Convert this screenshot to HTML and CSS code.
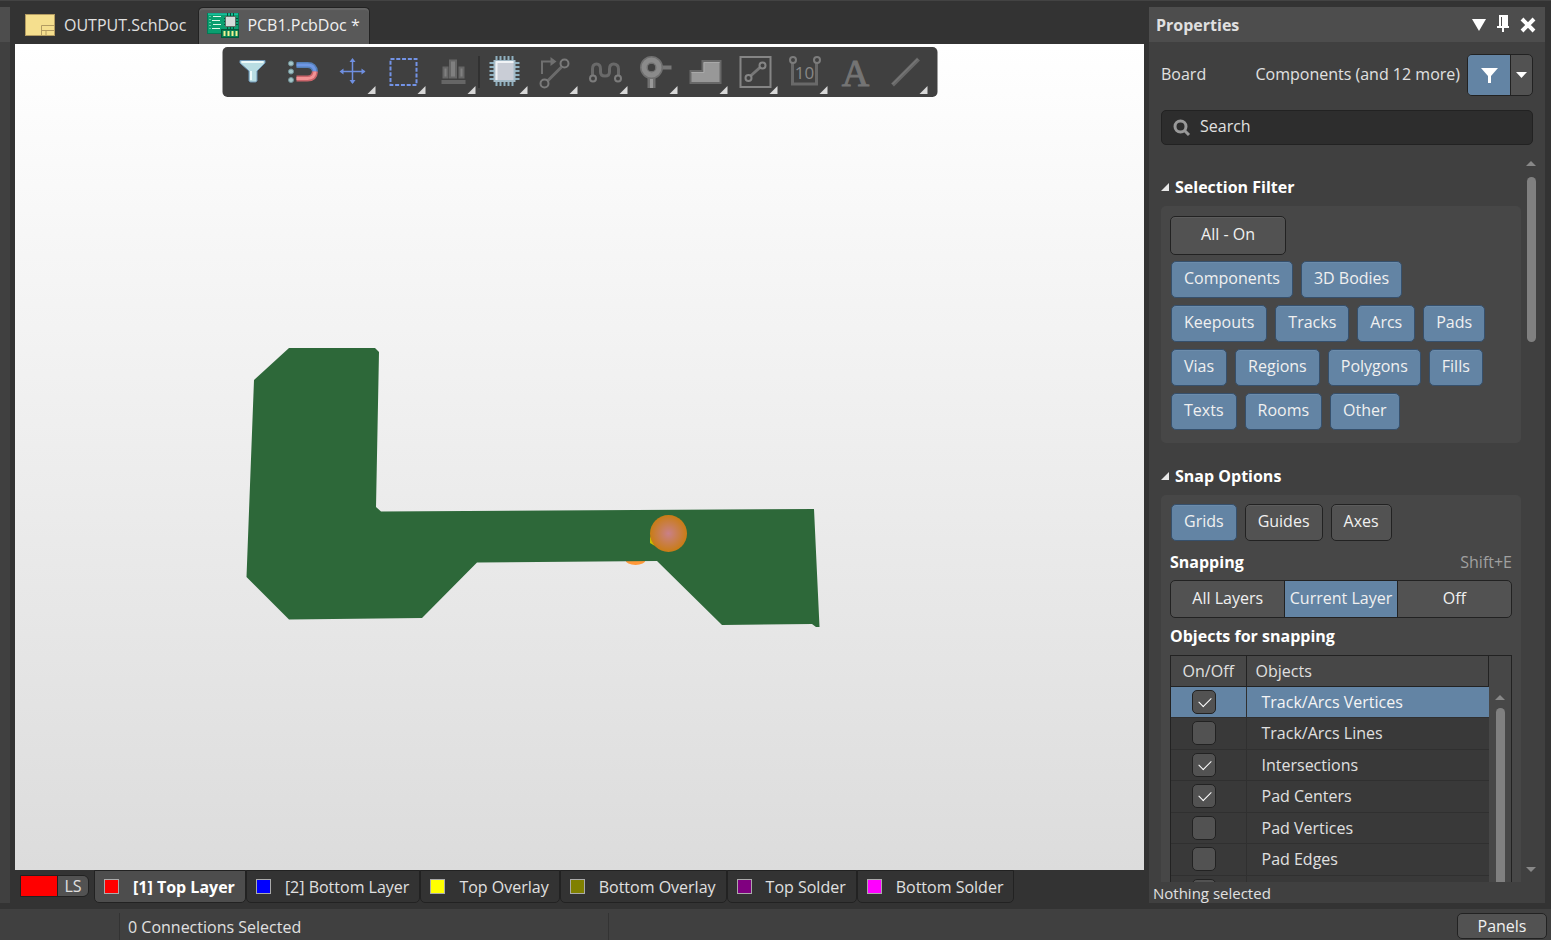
FILE: index.html
```html
<!DOCTYPE html>
<html lang="en">
<head>
    <meta charset="UTF-8">
    <meta name="viewport" content="width=device-width, initial-scale=1.0">
    <title>PCB1.PcbDoc</title>
    <link rel="stylesheet" href="styles.css">
</head>
<body>
    <div class="workspace">
        <div class="dock"><div class="dock-head"></div></div>
        <main class="document">
            <nav class="doc-tabs">
                <button class="doc-tab">
                    <svg width="30" height="22" viewBox="0 0 30 22">
                        <rect x=".5" y=".5" width="29" height="21" fill="#f5df8e" stroke="#b39c62"/>
                        <path d="M16.500 21V11.500H29M16.500 16.500H29M21 16.500V21" fill="none" stroke="#b39c62"/>
                    </svg>
                    OUTPUT.SchDoc
                </button>
                <button class="doc-tab doc-tab--active">
                    <svg width="32" height="26" viewBox="0 0 32 26">
                        <rect x=".5" y="1.500" width="31" height="20" fill="#0a9f70" stroke="#047a55"/>
                        <path d="M1 2H31" stroke="#22dfc4"/>
                        <path d="M6 4.500h8M5 8.500h8M6 12.500h8M5 16.500h8" stroke="#e0f7e8"/>
                        <path d="M3 4v14" stroke="#b8efd4" stroke-dasharray="1 2"/>
                        <path d="M20.500 1v16M23.500 1v16M26.500 1v16M17 6.500h14M17 9.500h14M17 12.500h14" stroke="#044f38"/>
                        <rect x="18.500" y="4.500" width="10" height="10" fill="#d5dcda" stroke="#5d7068"/>
                        <rect x="14.500" y="17.500" width="17" height="8" fill="#078055" stroke="#04593c"/>
                        <path d="M17.500 19v5M21.500 19v5M25.500 19v5M29.500 19v5" stroke="#f2f391" stroke-width="2"/>
                    </svg>
                    PCB1.PcbDoc *
                </button>
            </nav>
            <div class="canvas">
                <svg class="board" viewBox="15 44 1129 826">
                    <defs>
                        <radialGradient id="pad">
                            <stop offset="0" stop-color="#c98088"/>
                            <stop offset="1" stop-color="#c97c14"/>
                        </radialGradient>
                    </defs>
                    <ellipse cx="635.500" cy="560" rx="10" ry="5" fill="#ff9838"/>
                    <path fill="#2d6839" d="M289 348H375L379 352L376 507L381 511.500L814 509L819.500 627H816L812 624L722 625L657 561L477 562.500L422 618L289 619.500L246.500 577L254 380Z"/>
                    <path fill="#c8bf00" d="M650 536v7l5 3z"/>
                    <circle cx="668.500" cy="533.500" r="18.500" fill="url(#pad)"/>
                </svg>
                <div class="toolbar">
                    <button class="tool" aria-label="Filter">
                        <svg viewBox="0 0 50 50">
                            <path d="M12.500 13.500H37.500V16L29.500 24V34L28 35H23L21.500 34V24L12.500 16Z" fill="#b9dde3" stroke="#6d95b5"/>
                            <path d="M14 15H36" stroke="#eefafa" stroke-width="2"/>
                            <path d="M23.500 24V33" stroke="#eefafa" stroke-width="2"/>
                        </svg>
                    </button>
                    <button class="tool" aria-label="Snapping">
                        <svg viewBox="0 0 50 50">
                            <g fill="#a5c6c9" stroke="#6f9096"><circle cx="13.500" cy="16.500" r="2.500"/><circle cx="13.500" cy="24.500" r="2.500"/><circle cx="13.500" cy="33" r="2.500"/></g>
                            <path d="M19 18H30Q37 18 37.500 25" fill="none" stroke="#5580b8" stroke-width="6"/>
                            <path d="M19 18H30Q37 18 37.500 25" fill="none" stroke="#6f97e4" stroke-width="3"/>
                            <path d="M19 31.500H30Q37 31.500 37.500 24.500" fill="none" stroke="#c9646a" stroke-width="6"/>
                            <path d="M19 31.500H30Q37 31.500 37.500 24.500" fill="none" stroke="#f29294" stroke-width="3"/>
                        </svg>
                    </button>
                    <button class="tool" aria-label="Move">
                        <svg viewBox="0 0 50 50">
                            <path d="M25 13V36M14 24.500H37" stroke="#6f8fe0" stroke-width="1.500"/>
                            <path d="M25 11l3 4h-6zM25 37l3-4h-6zM12 24.500l4-3v6zM38 24.500l-4-3v6z" fill="#6f8fe0"/>
                            <path class="more" d="M48 39V47H40Z"/>
                        </svg>
                    </button>
                    <button class="tool" aria-label="Select">
                        <svg viewBox="0 0 50 50">
                            <rect x="13" y="12" width="26" height="26" fill="none" stroke="#7393e6" stroke-width="2" stroke-dasharray="4 1.780"/>
                            <path class="more" d="M48 39V47H40Z"/>
                        </svg>
                    </button>
                    <button class="tool" aria-label="Align">
                        <svg viewBox="0 0 50 50">
                            <path d="M14 33H38V37H14Z" fill="#666"/>
                            <path d="M16 20.500h4v10h-4zM22.500 13.500h6v17h-6zM32 20.500h4v10h-4z" fill="#808080" stroke="#666" stroke-width="2"/>
                            <path class="more" d="M48 39V47H40Z"/>
                        </svg>
                    </button>
                    <span class="tool-sep"></span>
                    <button class="tool" aria-label="Place component">
                        <svg viewBox="0 0 50 50">
                            <path d="M17 9V39M21 9V39M25 9V39M29 9V39M33 9V39M10 16H40M10 20H40M10 24H40M10 28H40M10 32H40" stroke="#8fb0c0" stroke-width="2"/>
                            <rect x="15" y="14" width="20" height="20" fill="#c9cdd6" stroke="#a2b9c6" stroke-width="2"/>
                            <path d="M17 33V15H34" fill="none" stroke="#f0f3f6" stroke-width="2"/>
                            <path class="more" d="M48 39V47H40Z"/>
                        </svg>
                    </button>
                    <button class="tool" aria-label="Route">
                        <svg viewBox="0 0 50 50">
                            <path d="M12.500 27V14.500H22" fill="none" stroke="#707070" stroke-width="2"/>
                            <path d="M21 10l6 4.500-6 4.500z" fill="#707070"/>
                            <path d="M18 34L32 20" stroke="#6b6b6b" stroke-width="3"/>
                            <g fill="none" stroke="#7a7a7a" stroke-width="2"><circle cx="15" cy="36.500" r="4"/><circle cx="35" cy="16.500" r="4"/></g>
                            <path class="more" d="M48 39V47H40Z"/>
                        </svg>
                    </button>
                    <button class="tool" aria-label="Tune length">
                        <svg viewBox="0 0 50 50">
                            <path d="M13 28V22Q13 17 17 17Q21 17 21 22V25Q21 29 25.500 29Q30 29 30 25V22Q30 17 34 17Q39 17 39 22V28" fill="none" stroke="#696969" stroke-width="3"/>
                            <g fill="#404040" stroke="#7c7c7c" stroke-width="2"><circle cx="13.500" cy="31.500" r="3"/><circle cx="38.500" cy="31.500" r="3"/></g>
                            <path class="more" d="M48 39V47H40Z"/>
                        </svg>
                    </button>
                    <button class="tool" aria-label="Via">
                        <svg viewBox="0 0 50 50">
                            <path d="M30 20.500H42" stroke="#777" stroke-width="4"/>
                            <path d="M22 30V41" stroke="#707070" stroke-width="8"/>
                            <path d="M22 30V41" stroke="#999" stroke-width="3"/>
                            <circle cx="22" cy="20.500" r="7.500" fill="none" stroke="#707070" stroke-width="8"/>
                            <circle cx="22" cy="20.500" r="7.500" fill="none" stroke="#8a8a8a" stroke-width="5"/>
                            <circle cx="22" cy="20.500" r="3.500" fill="#404040"/>
                            <path class="more" d="M48 39V47H40Z"/>
                        </svg>
                    </button>
                    <button class="tool" aria-label="Polygon pour">
                        <svg viewBox="0 0 50 50">
                            <path d="M11 36V24H23V14H41V36Z" fill="#989898" stroke="#686868" stroke-width="2"/>
                            <path d="M12 25.500H24.500V15.500H40" fill="none" stroke="#a9a9a9"/>
                            <path class="more" d="M48 39V47H40Z"/>
                        </svg>
                    </button>
                    <button class="tool" aria-label="Room">
                        <svg viewBox="0 0 50 50">
                            <rect x="11" y="10" width="30" height="30" fill="none" stroke="#858585" stroke-width="2"/>
                            <path d="M21 29L31 20" stroke="#777" stroke-width="3"/>
                            <g fill="none" stroke="#858585" stroke-width="2"><circle cx="19" cy="31" r="3"/><circle cx="33" cy="18.500" r="3"/></g>
                            <path class="more" d="M48 39V47H40Z"/>
                        </svg>
                    </button>
                    <button class="tool" aria-label="Dimension">
                        <svg viewBox="0 0 50 50">
                            <path d="M13 16V37H37V16" fill="none" stroke="#696969" stroke-width="3"/>
                            <g fill="#404040" stroke="#7c7c7c" stroke-width="2"><circle cx="13.500" cy="13" r="3"/><circle cx="37.500" cy="13" r="3"/></g>
                            <text class="dim-text" x="25" y="32" text-anchor="middle">10</text>
                            <path class="more" d="M48 39V47H40Z"/>
                        </svg>
                    </button>
                    <button class="tool" aria-label="Text">
                        <svg viewBox="0 0 50 50"><text class="letter" x="26" y="39" text-anchor="middle">A</text></svg>
                    </button>
                    <button class="tool" aria-label="Line">
                        <svg viewBox="0 0 50 50">
                            <path d="M13 38L39 12" stroke="#686868" stroke-width="4"/>
                            <path d="M13 37L38 12" stroke="#808080"/>
                            <path class="more" d="M48 39V47H40Z"/>
                        </svg>
                    </button>
                </div>
            </div>
            <div class="layers">
                <div class="layer-set">
                    <span class="layer-color red"></span>
                    <button class="ls">LS</button>
                </div>
                <button class="layer layer--active"><span class="swatch red"></span>[1] Top Layer</button>
                <button class="layer"><span class="swatch blue"></span>[2] Bottom Layer</button>
                <button class="layer"><span class="swatch yellow"></span>Top Overlay</button>
                <button class="layer"><span class="swatch olive"></span>Bottom Overlay</button>
                <button class="layer"><span class="swatch purple"></span>Top Solder</button>
                <button class="layer"><span class="swatch magenta"></span>Bottom Solder</button>
            </div>
        </main>
        <aside class="panel">
            <header class="panel-head">
                <h1>Properties</h1>
                <button class="head-btn" aria-label="Menu"><svg width="14" height="12" viewBox="0 0 14 12"><path d="M0 0H14L7 12Z" fill="#fff"/></svg></button>
                <button class="head-btn" aria-label="Pin"><svg width="12" height="19" viewBox="0 0 12 19"><path d="M2 0H11V11H12V13H7V17H5V13H0V11H2ZM4 2V11H5V2Z" fill="#fff" fill-rule="evenodd"/></svg></button>
                <button class="head-btn" aria-label="Close"><svg width="16" height="16" viewBox="0 0 16 16"><path d="M2 2L14 14M14 2L2 14" stroke="#fff" stroke-width="4"/></svg></button>
            </header>
            <div class="scope">
                <span>Board</span>
                <span class="scope-types">Components (and 12 more)</span>
                <div class="split">
                    <button class="split-main" aria-label="Filter"><svg width="17" height="15" viewBox="0 0 17 15"><path d="M0 0H17L10 8V15H7V8Z" fill="#fff"/></svg></button>
                    <button class="split-arrow" aria-label="Filter options"><svg width="11" height="6" viewBox="0 0 11 6"><path d="M0 0H11L5.500 6Z" fill="#fff"/></svg></button>
                </div>
            </div>
            <label class="search">
                <svg width="18" height="18" viewBox="0 0 18 18"><circle cx="7.500" cy="7.500" r="5.500" fill="none" stroke="#999" stroke-width="3"/><path d="M11 11L16 16" stroke="#999" stroke-width="3"/></svg>
                <input type="text" placeholder="Search" aria-label="Search">
            </label>
            <div class="scroll">
                <div class="sections">
                    <h2>Selection Filter</h2>
                    <section class="box">
                        <button class="btn btn--all">All - On</button>
                        <div class="row">
                            <button class="btn btn--on">Components</button>
                            <button class="btn btn--on">3D Bodies</button>
                        </div>
                        <div class="row">
                            <button class="btn btn--on">Keepouts</button>
                            <button class="btn btn--on">Tracks</button>
                            <button class="btn btn--on">Arcs</button>
                            <button class="btn btn--on">Pads</button>
                        </div>
                        <div class="row">
                            <button class="btn btn--on">Vias</button>
                            <button class="btn btn--on">Regions</button>
                            <button class="btn btn--on">Polygons</button>
                            <button class="btn btn--on">Fills</button>
                        </div>
                        <div class="row">
                            <button class="btn btn--on">Texts</button>
                            <button class="btn btn--on">Rooms</button>
                            <button class="btn btn--on">Other</button>
                        </div>
                    </section>
                    <h2>Snap Options</h2>
                    <section class="box box--snap">
                        <div class="row">
                            <button class="btn btn--on">Grids</button>
                            <button class="btn">Guides</button>
                            <button class="btn">Axes</button>
                        </div>
                        <div class="caption"><h3>Snapping</h3><span>Shift+E</span></div>
                        <div class="segments">
                            <button>All Layers</button>
                            <button class="current">Current Layer</button>
                            <button>Off</button>
                        </div>
                        <div class="caption"><h3>Objects for snapping</h3></div>
                        <div class="objects">
                            <table>
                                <thead>
                                    <tr><th class="col-check">On/Off</th><th>Objects</th></tr>
                                </thead>
                                <tbody>
                                    <tr class="selected"><td><input type="checkbox" id="o1" checked></td><td><label for="o1">Track/Arcs Vertices</label></td></tr>
                                    <tr><td><input type="checkbox" id="o2"></td><td><label for="o2">Track/Arcs Lines</label></td></tr>
                                    <tr><td><input type="checkbox" id="o3" checked></td><td><label for="o3">Intersections</label></td></tr>
                                    <tr><td><input type="checkbox" id="o4" checked></td><td><label for="o4">Pad Centers</label></td></tr>
                                    <tr><td><input type="checkbox" id="o5"></td><td><label for="o5">Pad Vertices</label></td></tr>
                                    <tr><td><input type="checkbox" id="o6"></td><td><label for="o6">Pad Edges</label></td></tr>
                                    <tr><td><input type="checkbox" id="o7" aria-label="Object"></td><td></td></tr>
                                </tbody>
                            </table>
                            <div class="objects-bar">
                                <span class="arrow-up"></span>
                                <span class="thumb"></span>
                            </div>
                        </div>
                    </section>
                </div>
                <div class="bar">
                    <span class="arrow-up"></span>
                    <span class="thumb"></span>
                    <span class="arrow-down"></span>
                </div>
            </div>
            <footer class="panel-foot">Nothing selected</footer>
        </aside>
    </div>
    <div class="status">
        <span class="status-cell status-cell--coords"></span>
        <span class="status-cell status-cell--info">0 Connections Selected</span>
        <button class="panels">Panels</button>
    </div>
</body>
</html>
```
FILE: styles.css
```css
*{
    padding: 0;
    margin: 0;
    box-sizing: border-box;
}
body{
    display: flex;
    flex-direction: column;
    height: 100vh;
    overflow: hidden;
    background-color: #333;
    color: #e0e0e0;
    font-family: "Open Sans", "Noto Sans", sans-serif;
    font-size: 16px;
    line-height: 22px;
    border-top: 1px solid #434343;
}
button, input{
    font: inherit;
    color: inherit;
    border: 0;
    background: none;
}
svg{
    display: block;
    flex: none;
}
.red{ background-color: #f00; }
.blue{ background-color: #00f; }
.yellow{ background-color: #ff0; }
.olive{ background-color: #808000; }
.purple{ background-color: #800080; }
.magenta{ background-color: #f0f; }

.workspace{
    flex: 1;
    min-height: 0;
    display: flex;
    gap: 5px;
    padding-right: 6px;
}
.dock{
    width: 10px;
    margin: 6px 0;
    background-color: #404040;
}
.dock-head{
    height: 35px;
    background-color: #4d4d4d;
}

/* document area */
.document{
    flex: 1;
    min-width: 0;
    display: flex;
    flex-direction: column;
}
.doc-tabs{
    height: 43px;
    padding-top: 6px;
    display: flex;
}
.doc-tab{
    display: flex;
    align-items: center;
    gap: 9px;
    padding: 0 12px 2px 10px;
    white-space: nowrap;
}
.doc-tab--active{
    gap: 8px;
    padding: 0 9px 2px 8px;
    color: #f0f0f0;
    background-color: #595959;
    border: 1px solid #222;
    border-bottom: 0;
    border-radius: 5px 5px 0 0;
    box-shadow: inset 0 2px 1px #666;
}
.canvas{
    flex: 1;
    min-height: 0;
    position: relative;
    background: linear-gradient(#fff, #dcdcdc);
}
.board{
    width: 100%;
    height: 100%;
}
.toolbar{
    position: absolute;
    top: 3px;
    left: 50%;
    transform: translateX(-50%);
    display: flex;
    padding: 0 8px 0 5px;
    background-color: #404040;
    border-radius: 5px;
}
.tool{
    width: 50px;
    height: 50px;
}
.tool-sep{
    width: 1px;
    height: 32px;
    margin: 9px 0 0 1px;
    background-color: #222;
}
.more{
    fill: #d8d8d8;
}
.dim-text{
    font-family: "Open Sans", sans-serif;
    font-size: 17px;
    fill: #888;
}
.letter{
    font-family: "Liberation Serif", serif;
    font-size: 38px;
    fill: #747474;
    stroke: #747474;
}

.layers{
    height: 39px;
    padding: 0 0 6px 5px;
    display: flex;
}
.layer-set{
    display: flex;
    width: 69px;
    height: 22px;
    margin: 5px 5px 0 0;
    border: 1px solid #222;
    border-radius: 0 6px 6px 0;
}
.layer-color{
    width: 36px;
}
.ls{
    flex: 1;
    background-color: #525252;
    border-left: 1px solid #222;
    border-radius: 0 5px 5px 0;
    line-height: 20px;
}
.layer{
    display: flex;
    align-items: center;
    gap: 14px;
    padding: 0 10px 0 9px;
    white-space: nowrap;
    border: 1px solid #222;
    border-radius: 0 0 5px 5px;
}
.layer--active{
    color: #fff;
    font-weight: bold;
    background-color: #4d4d4d;
}
.swatch{
    width: 15px;
    height: 15px;
    border: 1px solid #aaa;
}

/* properties panel */
.panel{
    width: 396px;
    margin: 6px 0;
    background-color: #404040;
    display: flex;
    flex-direction: column;
}
.panel-head{
    height: 35px;
    padding: 0 9px 0 7px;
    background-color: #4d4d4d;
    display: flex;
    align-items: center;
    gap: 11px;
}
h1, h2, h3{
    font-size: 16px;
    line-height: 22px;
    font-weight: bold;
}
h1{
    flex: 1;
}
.scope{
    display: flex;
    align-items: center;
    padding: 12px 12px 0;
}
.scope span{
    padding-bottom: 2px;
}
.scope-types{
    margin-left: auto;
}
.split{
    display: flex;
    height: 42px;
    margin-left: 7px;
    border: 1px solid #222;
    border-radius: 5px;
    background-color: #525252;
    overflow: hidden;
}
.split-main, .split-arrow{
    display: flex;
    align-items: center;
    justify-content: center;
}
.split-main{
    width: 43px;
    background-color: #6384a4;
    border-right: 1px solid #222;
}
.split-arrow{
    width: 21px;
}
.search{
    display: flex;
    align-items: center;
    gap: 9px;
    height: 35px;
    margin: 14px 12px 10px;
    padding: 0 11px;
    background-color: #2d2d2d;
    border: 1px solid #222;
    border-radius: 5px;
}
.search input{
    flex: 1;
    min-width: 0;
    padding-bottom: 4px;
}
.search input::placeholder{
    color: #e0e0e0;
    opacity: 1;
}
.scroll{
    flex: 1;
    min-height: 0;
    display: flex;
    padding: 0 9px 0 12px;
}
.sections{
    flex: 1;
    overflow: hidden;
}
h2{
    display: flex;
    align-items: center;
    gap: 6px;
    margin: 21px 0 8px;
    color: #fff;
}
h2::before{
    content: "";
    border-left: 8px solid transparent;
    border-bottom: 8px solid #e8e8e8;
}
.box{
    padding: 10px 9px 13px;
    background-color: #474747;
    border-radius: 5px;
    margin-bottom: 22px;
}
.row{
    display: flex;
    gap: 8px;
    margin: 7px 1px 0;
}
.box .btn--all + .row{
    margin-top: 6px;
}
.btn{
    height: 37px;
    padding: 0 12px 3px;
    white-space: nowrap;
    color: #f0f0f0;
    background-color: #525252;
    border: 1px solid #222;
    border-radius: 5px;
    box-shadow: inset 0 1px #5c5c5c;
}
.btn--all{
    width: 116px;
    height: 39px;
}
.btn--on{
    background-color: #6384a4;
    border-color: #36506c;
    box-shadow: inset 0 1px #6c8cab;
}
.box--snap{
    padding-top: 9px;
}
.box--snap .row{
    margin-top: 0;
}
.caption{
    display: flex;
    justify-content: space-between;
    margin: 10px 0 7px;
    color: #a0a0a0;
}
h3{
    color: #fff;
}
.segments{
    display: grid;
    grid-template-columns: repeat(3, 1fr);
    height: 38px;
    border: 1px solid #222;
    border-radius: 5px;
    background-color: #525252;
    color: #f0f0f0;
}
.segments button{
    white-space: nowrap;
    padding-bottom: 3px;
}
.segments .current{
    background-color: #6384a4;
    border: solid #222;
    border-width: 0 1px;
}
.segments + .caption{
    margin-top: 7px;
    margin-bottom: 8px;
}
.objects{
    display: flex;
    border: 1px solid #222;
}
table{
    flex: 1;
    border-collapse: collapse;
    table-layout: fixed;
    background-color: #393939;
}
th{
    height: 30px;
    padding-left: 9px;
    font-weight: normal;
    text-align: left;
    background-color: #474747;
    border-right: 1px solid #222;
    border-bottom: 1px solid #222;
}
.col-check{
    width: 75px;
    padding: 0;
    text-align: center;
}
td{
    height: 31px;
    padding-left: 15px;
    border: solid #303030;
    border-width: 0 0 1px;
}
td:first-child{
    padding: 0 8px 0 0;
    border-right-width: 1px;
}
tr:nth-child(even) td{
    height: 32px;
}
.selected td{
    color: #f5f5f5;
    background-color: #6384a4;
}
input[type="checkbox"]{
    appearance: none;
    display: block;
    width: 24px;
    height: 24px;
    margin: 0 auto;
    border: 1px solid #222;
    border-radius: 5px;
    background-color: #525252;
}
input[type="checkbox"]:checked::before{
    content: "";
    display: block;
    width: 11px;
    height: 6px;
    margin: 6px 0 0 6px;
    border: solid #fff;
    border-width: 0 0 1px 1px;
    transform: rotate(-45deg);
}
.objects-bar{
    width: 22px;
    padding-top: 39px;
    display: flex;
    flex-direction: column;
    align-items: center;
    gap: 8px;
}
.objects-bar .thumb{
    flex: 1;
}
.bar{
    width: 10px;
    margin-left: 5px;
    padding: 6px 0 10px;
    display: flex;
    flex-direction: column;
    align-items: center;
    gap: 11px;
}
.thumb{
    width: 9px;
    height: 165px;
    border-radius: 5px;
    background-color: #808080;
}
.arrow-up, .arrow-down{
    border: 5px solid transparent;
}
.arrow-up{
    border-top: 0;
    border-bottom-color: #888;
}
.arrow-down{
    margin-top: auto;
    border-bottom: 0;
    border-top-color: #888;
}
.panel-foot{
    padding: 0 4px;
    font-size: 15px;
    height: 21px;
}

/* status bar */
.status{
    display: flex;
    height: 31px;
    padding: 4px 4px 0 0;
    background-color: #404040;
}
.status-cell{
    padding: 3px 8px 0;
    border-right: 1px solid #333;
}
.status-cell--coords{
    width: 120px;
}
.status-cell--info{
    width: 489px;
}
.panels{
    margin-left: auto;
    width: 90px;
    height: 26px;
    color: #f0f0f0;
    background-color: #525252;
    border: 1px solid #222;
    border-radius: 5px;
}
```
